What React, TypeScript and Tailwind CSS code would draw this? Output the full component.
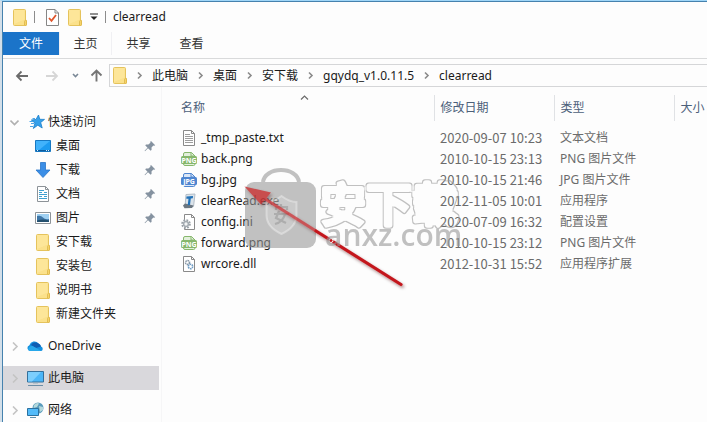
import React from 'react';

interface NavItem {
  label: string;
  icon: React.ReactNode;
  pinned?: boolean;
}

interface FileRow {
  name: string;
  date: string;
  type: string;
  icon: React.ReactNode;
}

const FolderIcon = () => (
  <svg width="14" height="17" viewBox="0 0 14 17" className="shrink-0" aria-hidden="true">
    <path d="M.5 1.500Q.5.5 1.500.5h10q1 0 1 1V11h.2q.8 0 .8 1v3.500q0 1-1 1H1.500q-1 0-1-1z" fill="#fbe18b" stroke="#e5c35c" />
    <path d="M1 1h10.500v9.500L1 15z" fill="#fde89f" opacity=".7" />
    <path d="M11.500 16v-3.500q0-1 1-1t1 1v3q0 1-1 1z" fill="#f6d36a" stroke="#dcb64a" strokeWidth=".8" />
  </svg>
);

const StarIcon = () => (
  <svg width="16" height="16" viewBox="0 0 16 16" className="shrink-0" aria-hidden="true">
    <path d="M9.500 1l1.300 4.300 4.700.1-3.800 3.100 1.500 5.500L8.800 11.200l-4.500 3.300 1.700-5.500-3.700-3 4.700-.6z" fill="#35a0ea" stroke="#1b7fcb" strokeWidth=".8" />
    <path d="M3.500 4.500h2.500M.5 7.500h3.500M2 9.500h3M1 12.500h3" stroke="#4aa5e8" strokeWidth="1" />
  </svg>
);

const DesktopIcon = () => (
  <svg width="16" height="16" viewBox="0 0 16 16" className="shrink-0" aria-hidden="true">
    <path d="M.5 2.500h15v11H.5z" fill="#1d9bf0" stroke="#1778c2" />
    <path d="M1 3h14L4 12H1z" fill="#41b2fb" />
    <path d="M1 12.500h14" stroke="#0e5c9c" />
    <path d="M2 12.500h1M11 12.500h1M13 12.500h1" stroke="#d8efff" />
  </svg>
);

const DownloadIcon = () => (
  <svg width="16" height="16" viewBox="0 0 16 16" className="shrink-0" aria-hidden="true">
    <path d="M5.500.5h5v7.500h4.500l-7 7.500-7-7.500h4.500z" fill="#3b8ee6" stroke="#2a76c9" strokeWidth=".8" />
  </svg>
);

const DocumentIcon = () => (
  <svg width="16" height="16" viewBox="0 0 16 16" className="shrink-0" aria-hidden="true">
    <path d="M2.500.5h8l3 3v12h-11z" fill="#fff" stroke="#8d9398" />
    <path d="M10.500.5v3h3" fill="none" stroke="#8d9398" />
    <path d="M4 4.500h5M4 6.500h3M9 6.500h3M4 8.500h8M4 10.500h3M9 10.500h3M4 12.500h8" stroke="#3fa0d0" />
  </svg>
);

const PictureIcon = () => (
  <svg width="16" height="16" viewBox="0 0 16 16" className="shrink-0" aria-hidden="true">
    <path d="M.5 2.500h15v11H.5z" fill="#fff" stroke="#8d9398" />
    <path d="M2 4h12v8H2z" fill="#9fd0f2" />
    <path d="M2 6q4-1 6 1.500t6 1.500v3H2z" fill="#3f77a8" />
    <path d="M2 10.500q6-2 12 0V12H2z" fill="#24506e" />
  </svg>
);

const CloudIcon = () => (
  <svg width="17" height="16" viewBox="0 0 17 16" className="shrink-0" aria-hidden="true">
    <path d="M3 13a3 3 0 0 1-.6-5.800A5.200 5.200 0 0 1 11.500 5.500 4 4 0 0 1 14 8.500a2.400 2.400 0 0 1 .3 4.500z" fill="#1490df" />
    <path d="M4 7A5.200 5.200 0 0 1 11.500 5.500Q13.500 6.600 14 8.500L9 10z" fill="#0f5db3" />
    <path d="M1 11.500Q2 7.500 5.500 8l8.500 4.800-.5.200H3q-1.500-.2-2-1.500z" fill="#28a8ea" />
  </svg>
);

const ComputerIcon = () => (
  <svg width="17" height="17" viewBox="0 0 17 17" className="shrink-0" aria-hidden="true">
    <path d="M.5 1.500h16v10.500H.5z" fill="#4cb6f8" stroke="#35709b" />
    <path d="M1 2h13L5 11.500H1z" fill="#7ccefd" />
    <path d="M6 13.500h5" stroke="#b8c4cc" />
    <path d="M1 15.500h15" stroke="#6d8ea6" />
  </svg>
);

const NetworkIcon = () => (
  <svg width="17" height="16" viewBox="0 0 17 16" className="shrink-0" aria-hidden="true">
    <circle cx="11" cy="6" r="5.500" fill="#5a9cbd" />
    <path d="M7 3q3-3 5-1.500L10 5 6.500 6zM12 4l4 1v3l-3 2z" fill="#b5d9dc" />
    <path d="M.5 6.500h11v7H.5z" fill="#52bbfa" stroke="#2b719f" />
    <path d="M3 15.500h6" stroke="#5f91af" />
  </svg>
);

const PinIcon = () => (
  <svg width="12" height="12" viewBox="0 0 12 12" className="shrink-0" aria-hidden="true">
    <path d="M7 1l4.200 4.200-1 .6-.8-.2-1.900 2 .1 2.200-.9.900L4 8.200 1 11.200.6 10.800 3.500 7.700 1.200 5.300l.9-.8 2.300.1 2-1.900-.1-.9z" fill="#8592a0" />
  </svg>
);

const TextFileIcon = () => (
  <svg width="16" height="16" viewBox="0 0 16 16" aria-hidden="true">
    <path d="M2.500.5h8l3 3v12h-11z" fill="#fff" stroke="#8a8a8a" />
    <path d="M10.500.5v3h3" fill="none" stroke="#8a8a8a" />
    <path d="M4 4.500h5M4 6.500h8M4 8.500h8M4 10.500h8M4 12.500h8" stroke="#9d9d9d" />
  </svg>
);

const ImageFileIcon = ({ kind, color, tint }: { kind: string; color: string; tint: string }) => (
  <svg width="16" height="16" viewBox="0 0 16 16" aria-hidden="true">
    <path d="M2.500 3q0-1.500 1.500-1.500h6.500l3.500 3.500v8q0 1.500-1.500 1.500H4q-1.500 0-1.500-1.500z" fill={tint} stroke={color} />
    <path d="M10 1.500v3.500h4" fill="none" stroke={color} />
    <rect x="0" y="5" width="16" height="8" rx="1.500" fill={color} />
    <text x="8" y="11.500" textAnchor="middle" fontSize="7" fontWeight="700" fill="#fff">{kind}</text>
  </svg>
);

const AppIcon = () => (
  <svg width="16" height="16" viewBox="0 0 16 16" aria-hidden="true">
    <path d="M5 1.500L14 1l-1.500 12.500L4 14z" fill="#dbe3ea" stroke="#b4bec8" />
    <path d="M2 12.500l2-2 8.500 2-1.500 2.500-7.500.2z" fill="#6b7680" />
    <path d="M5.500 3.500l6.500-.5-.2 2.300-2 .2-.8 6.500-2.300.2.800-6.500-2.200.1z" fill="#2272b8" />
  </svg>
);

const SettingsFileIcon = () => (
  <svg width="16" height="16" viewBox="0 0 16 16" aria-hidden="true">
    <path d="M3.500.5h7l3 3v12h-10z" fill="#fff" stroke="#8a8a8a" />
    <path d="M10.500.5v3h3" fill="none" stroke="#8a8a8a" />
    <circle cx="5" cy="10" r="3.800" fill="#fff" stroke="#9aa1a7" strokeWidth="2" strokeDasharray="1.700 1.280" />
    <circle cx="5" cy="10" r="2.400" fill="#f2f4f5" stroke="#a4abb1" strokeWidth="1.500" />
  </svg>
);

const LibraryFileIcon = () => (
  <svg width="16" height="16" viewBox="0 0 16 16" aria-hidden="true">
    <path d="M2.500.5h8l3 3v12h-11z" fill="#fff" stroke="#8a8a8a" />
    <path d="M10.500.5v3h3" fill="none" stroke="#8a8a8a" />
    <circle cx="6.500" cy="6.500" r="2" fill="none" stroke="#8797a6" strokeWidth="1.600" strokeDasharray="1.500 .6" />
    <circle cx="9.500" cy="10.500" r="2.200" fill="#fff" stroke="#6f9cc4" strokeWidth="1.600" strokeDasharray="1.500 .6" />
  </svg>
);

const ClipboardIcon = () => (
  <svg width="13" height="17" viewBox="0 0 13 17" className="shrink-0" aria-hidden="true">
    <path d="M.5.500h8.500l3.500 3.500v12.500H.5z" fill="#fff" stroke="#868686" />
    <path d="M9 .5v3.500h3.500" fill="none" stroke="#868686" />
    <path d="M3 9l2.500 2.800L10 6" fill="none" stroke="#e0552b" strokeWidth="1.800" />
  </svg>
);

const Chevron = ({ d, color = '#8a8a8a', width = 1.4 }: { d: string; color?: string; width?: number }) => (
  <svg width="9" height="9" viewBox="0 0 9 9" className="shrink-0" aria-hidden="true">
    <path d={d} fill="none" stroke={color} strokeWidth={width} />
  </svg>
);

const RIGHT = 'M3 1.500l3 3-3 3';
const RIGHT_LARGE = 'M3 .5l4 4-4 4';
const DOWN = 'M.5 2.500l4 4 4-4';
const UP = 'M1 6.500l3.500-3.500 3.500 3.500';

const tabs = ['主页', '共享', '查看'];
const crumbs = ['此电脑', '桌面', '安下载', 'gqydq_v1.0.11.5', 'clearread'];

const quickAccess: NavItem[] = [
  { label: '桌面', icon: <DesktopIcon />, pinned: true },
  { label: '下载', icon: <DownloadIcon />, pinned: true },
  { label: '文档', icon: <DocumentIcon />, pinned: true },
  { label: '图片', icon: <PictureIcon />, pinned: true },
  { label: '安下载', icon: <FolderIcon /> },
  { label: '安装包', icon: <FolderIcon /> },
  { label: '说明书', icon: <FolderIcon /> },
  { label: '新建文件夹', icon: <FolderIcon /> },
];

const roots: NavItem[] = [
  { label: 'OneDrive', icon: <CloudIcon /> },
  { label: '此电脑', icon: <ComputerIcon /> },
  { label: '网络', icon: <NetworkIcon /> },
];

const pngIcon = <ImageFileIcon kind="PNG" color="#86b76c" tint="#e3f0dc" />;
const jpgIcon = <ImageFileIcon kind="JPG" color="#4f86d0" tint="#dbe7f7" />;

const files: FileRow[] = [
  { name: '_tmp_paste.txt', date: '2020-09-07 10:23', type: '文本文档', icon: <TextFileIcon /> },
  { name: 'back.png', date: '2010-10-15 23:13', type: 'PNG 图片文件', icon: pngIcon },
  { name: 'bg.jpg', date: '2010-10-15 21:46', type: 'JPG 图片文件', icon: jpgIcon },
  { name: 'clearRead.exe', date: '2012-11-05 10:01', type: '应用程序', icon: <AppIcon /> },
  { name: 'config.ini', date: '2020-07-09 16:32', type: '配置设置', icon: <SettingsFileIcon /> },
  { name: 'forward.png', date: '2010-10-15 23:12', type: 'PNG 图片文件', icon: pngIcon },
  { name: 'wrcore.dll', date: '2012-10-31 15:52', type: '应用程序扩展', icon: <LibraryFileIcon /> },
];

const TitleBar = () => (
  <header className="flex h-[30px] items-center pl-[10px]">
    <FolderIcon />
    <span className="ml-[7px] h-3 w-px bg-[#8c8c8c]" />
    <button aria-label="属性" className="ml-[11px]"><ClipboardIcon /></button>
    <button aria-label="新建文件夹" className="ml-[9px]"><FolderIcon /></button>
    <button aria-label="自定义快速访问工具栏" className="ml-2">
      <svg width="8" height="8" viewBox="0 0 8 8" aria-hidden="true">
        <path d="M0 1h8" stroke="#222" />
        <path d="M.5 3.500h7L4 7z" fill="#222" />
      </svg>
    </button>
    <span className="ml-[7px] h-3 w-px bg-[#8c8c8c]" />
    <h1 className="ml-[7px]">clearread</h1>
  </header>
);

const Ribbon = () => (
  <div className="flex h-[27px] items-start border-b border-[#d9dadb]">
    <button className="h-[23px] w-14 bg-[#1b74c9] text-white">文件</button>
    {tabs.map((tab, i) => (
      <button key={tab} className={`h-[23px] w-[53px] text-[#333] ${i === 0 ? 'border-x border-[#f0f0f3]' : ''}`}>
        {tab}
      </button>
    ))}
  </div>
);

const AddressBar = () => (
  <div className="mt-[5px] flex h-[23px] items-center">
    <button aria-label="后退" className="ml-3">
      <svg width="14" height="12" viewBox="0 0 14 12"><path d="M13 6H2M6.500 1.500L2 6l4.500 4.500" fill="none" stroke="#6b6b6b" strokeWidth="1.800" /></svg>
    </button>
    <button aria-label="前进" className="ml-4">
      <svg width="14" height="12" viewBox="0 0 14 12"><path d="M1 6h11M7.500 1.500L12 6l-4.500 4.500" fill="none" stroke="#d6d6d6" strokeWidth="1.800" /></svg>
    </button>
    <button aria-label="最近浏览的位置" className="ml-3">
      <Chevron d="M2 3l2.500 2.500L7 3" color="#7a8896" width={1.6} />
    </button>
    <button aria-label="上移" className="ml-[10px]">
      <svg width="13" height="13" viewBox="0 0 13 13"><path d="M6.500 12.500V2M1.500 6.500l5-5 5 5" fill="none" stroke="#757575" strokeWidth="1.900" /></svg>
    </button>
    <nav aria-label="路径" className="ml-[6px] flex h-full flex-1 items-center whitespace-nowrap border-y border-l border-[#d5d6d8] pl-[3px]">
      <FolderIcon />
      {crumbs.map((crumb) => (
        <React.Fragment key={crumb}>
          <span className="flex w-[25px] shrink-0 justify-center"><Chevron d={RIGHT} width={1.6} /></span>
          <button>{crumb}</button>
        </React.Fragment>
      ))}
    </nav>
  </div>
);

const Sidebar = () => (
  <aside className="w-[159px] shrink-0 border-r border-[#f6f6f7] pt-[23px]">
    <button className="flex h-6 w-full items-center pl-[7px]">
      <Chevron d={DOWN} color="#b0b0b0" width={1.6} />
      <span className="ml-[10px] flex w-[19px]"><StarIcon /></span>
      快速访问
    </button>
    {quickAccess.map((item) => (
      <button key={item.label} className="flex h-6 w-full items-center pl-8 pr-[5px]">
        <span className="flex w-[21px] justify-start">
          <span className="flex w-4 justify-center">{item.icon}</span>
        </span>
        <span className="flex-1 text-left">{item.label}</span>
        {item.pinned && <PinIcon />}
      </button>
    ))}
    {roots.map((item) => (
      <button
        key={item.label}
        className={`mt-2 flex h-6 w-[156px] items-center pl-[7px] ${item.label === '此电脑' ? 'bg-[#d9d8dc]' : ''}`}
      >
        <Chevron d={RIGHT_LARGE} color="#c4c4c4" width={1.6} />
        <span className="ml-2 mr-1 flex w-[17px]">{item.icon}</span>
        {item.label}
      </button>
    ))}
  </aside>
);

const FileTable = () => (
  <table className="w-full table-fixed text-left whitespace-nowrap text-[#6b6b6b]">
    <colgroup>
      <col className="w-[253px]" />
      <col className="w-[120px]" />
      <col className="w-[120px]" />
      <col />
    </colgroup>
    <thead>
      <tr className="h-[26px] text-[#4c607a]">
        <th className="relative border-r border-[#e0e2e5] p-0 font-normal">
          名称
          <span className="absolute left-[119px] top-[-2px]"><Chevron d={UP} color="#6b6b6b" width={1.2} /></span>
        </th>
        <th className="border-r border-[#e0e2e5] p-0 pl-[6px] font-normal">修改日期</th>
        <th className="border-r border-[#e0e2e5] p-0 pl-[6px] font-normal">类型</th>
        <th className="p-0 pl-[6px] font-normal">大小</th>
      </tr>
    </thead>
    <tbody>
      <tr className="h-[6px]"><td colSpan={4} className="p-0" /></tr>
      {files.map((file) => (
        <tr key={file.name} className="h-[21px]">
          <td className="p-0">
            <span className="flex items-center gap-1 text-[#1a1a1a]">
              {file.icon}
              {file.name}
            </span>
          </td>
          <td className="p-0 pl-[6px] font-['Noto_Sans_CJK_SC',sans-serif] text-[13px] leading-4">{file.date}</td>
          <td className="p-0 pl-[6px]">{file.type}</td>
          <td className="p-0" />
        </tr>
      ))}
    </tbody>
  </table>
);

// Translucent site stamp and red pointer that sit on top of the list
const Stamp = () => (
  <svg
    width="230"
    height="130"
    viewBox="240 165 230 130"
    className="pointer-events-none absolute left-[78px] top-[77px]"
    aria-hidden="true"
  >
    <defs>
      <filter id="shadow" x="-10%" y="-10%" width="125%" height="130%">
        <feDropShadow dx="1.500" dy="2" stdDeviation="1.800" floodColor="#400" floodOpacity=".45" />
      </filter>
      <filter id="outline" x="-5%" y="-10%" width="110%" height="120%">
        <feMorphology in="SourceAlpha" operator="erode" radius="1" result="inner" />
        <feComposite in="SourceGraphic" in2="inner" operator="out" />
      </filter>
    </defs>
    <g opacity=".58">
      <path d="M263 183C264 175.500 272 171 281 171s17 4.500 18 12" fill="none" stroke="#969696" strokeWidth="4" />
      <rect x="245" y="183" width="71" height="66" rx="9" fill="#969696" />
    </g>
    <path d="M281.500 197q8 6 15 6v13q0 12-15 19-15-7-15-19v-13q7 0 15-6z" fill="#fff" fillOpacity=".15" stroke="#fff" strokeOpacity=".35" strokeWidth="2" />
    <path d="M276 211v-3h11v3M281 205v3M274 215h15M279 212l-3 7 10 5M285 215q-2 8-10 10" fill="none" stroke="#999" strokeOpacity=".6" strokeWidth="2.200" />
    <g filter="url(#shadow)" opacity=".72">
      <path d="M262 198L316 232" stroke="#cc2a2e" strokeWidth="3" />
      <path d="M244.500 187.500l26.500 6-10 12z" fill="#cc2024" />
    </g>
    <g filter="url(#shadow)">
      <path d="M316 232L401 285.500" stroke="#c4161c" strokeWidth="3.200" strokeLinecap="round" />
    </g>
    <circle cx="331" cy="241.500" r="2" fill="#c4161c" stroke="#fff" />
    <g opacity=".6">
      <text
        x="320"
        y="222"
        fontSize="46"
        fontWeight="500"
        fill="#999"
        stroke="#999"
        strokeWidth="6"
        strokeLinejoin="round"
        filter="url(#outline)"
      >
        安下载
      </text>
      <text x="325" y="247" fontSize="30" fontWeight="600" fill="#999" className="font-['Open_Sans',sans-serif]">anxz.com</text>
    </g>
  </svg>
);

const App: React.FC = () => {
  return (
    <div className="min-h-screen overflow-hidden border-l-2 border-t border-l-[#d3dfe9] border-t-[#9fd6f8] bg-[#fdfdfd] font-['Noto_Sans','Noto_Sans_CJK_SC',sans-serif] text-xs leading-4 text-[#1a1a1a]">
      <div className="flex min-h-screen flex-col border-l border-t border-[#4682ae]">
        <TitleBar />
        <Ribbon />
        <AddressBar />
        <div className="flex flex-1">
          <Sidebar />
          <main className="relative min-w-0 flex-1 pl-[19px] pt-2">
            <FileTable />
            <Stamp />
          </main>
        </div>
      </div>
    </div>
  );
};

export default App;
